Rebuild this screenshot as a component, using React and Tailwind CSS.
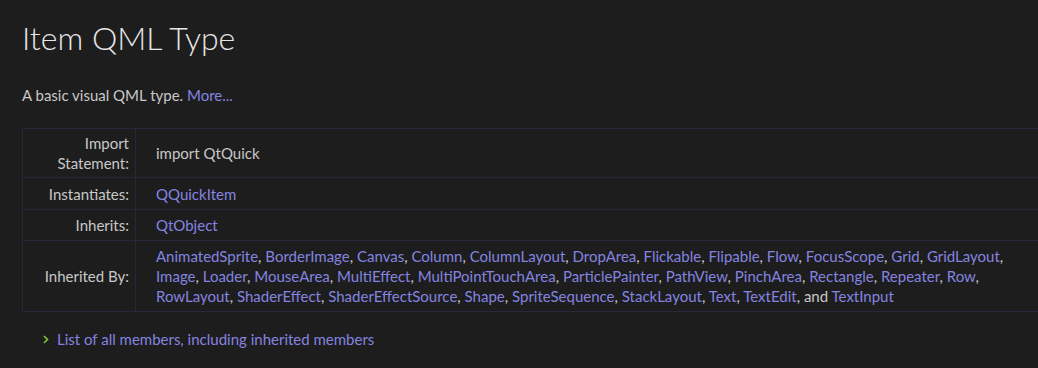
import React from "react";

const lines = [
  ["AnimatedSprite", "BorderImage", "Canvas", "Column", "ColumnLayout", "DropArea",
    "Flickable", "Flipable", "Flow", "FocusScope", "Grid", "GridLayout"],
  ["Image", "Loader", "MouseArea", "MultiEffect", "MultiPointTouchArea", "ParticlePainter",
    "PathView", "PinchArea", "Rectangle", "Repeater", "Row"],
  ["RowLayout", "ShaderEffect", "ShaderEffectSource", "Shape", "SpriteSequence",
    "StackLayout", "Text", "TextEdit"],
];

const Link = ({ children }) => (
  <a href="#" className="text-[#8484e0] no-underline">
    {children}
  </a>
);

export default function App() {
  return (
    <div
      className="w-[1038px] h-[368px] overflow-hidden bg-[#1d1d1d] text-[#c8c8c8] text-[15px] leading-[20px]"
      style={{ fontFamily: "Lato, 'Open Sans', sans-serif" }}
    >
      <div className="pl-[22px] pt-[18px]">
        <h1 className="text-[32px] leading-[40px] font-light text-[#e6e6e6]">
          Item QML Type
        </h1>
        <p className="mt-[27px]">
          A basic visual QML type. <Link>More...</Link>
        </p>

        <table className="mt-[23px] w-[1100px] border-collapse border border-[#25283a]">
          <tbody>
            <tr className="border-b border-[#25283a]">
              <td className="w-[113px] border-r border-[#25283a] pr-[6px] text-right align-middle h-[49px]">
                Import
                <br />
                Statement:
              </td>
              <td className="pl-[20px]">import QtQuick</td>
            </tr>
            <tr className="border-b border-[#25283a]">
              <td className="border-r border-[#25283a] pr-[6px] text-right h-[32px]">
                Instantiates:
              </td>
              <td className="pl-[20px]">
                <Link>QQuickItem</Link>
              </td>
            </tr>
            <tr className="border-b border-[#25283a]">
              <td className="border-r border-[#25283a] pr-[6px] text-right h-[31px]">
                Inherits:
              </td>
              <td className="pl-[20px]">
                <Link>QtObject</Link>
              </td>
            </tr>
            <tr>
              <td className="border-r border-[#25283a] pr-[6px] text-right">
                Inherited By:
              </td>
              <td className="pl-[20px] py-[5px]">
                {lines.map((line, li) => (
                  <div key={li} className="whitespace-nowrap">
                    {line.map((name) => (
                      <span key={name}>
                        <Link>{name}</Link>,{" "}
                      </span>
                    ))}
                    {li === 2 && (
                      <>
                        and <Link>TextInput</Link>
                      </>
                    )}
                  </div>
                ))}
              </td>
            </tr>
          </tbody>
        </table>

        <div className="mt-[17px] pl-[21px] flex items-center gap-[8px]">
          <svg width="6" height="9" viewBox="0 0 6 9" className="mt-[1px]">
            <path d="M1 1l3.5 3.5L1 8" fill="none" stroke="#7fc536" strokeWidth="1.6" />
          </svg>
          <Link>List of all members, including inherited members</Link>
        </div>
      </div>
    </div>
  );
}
